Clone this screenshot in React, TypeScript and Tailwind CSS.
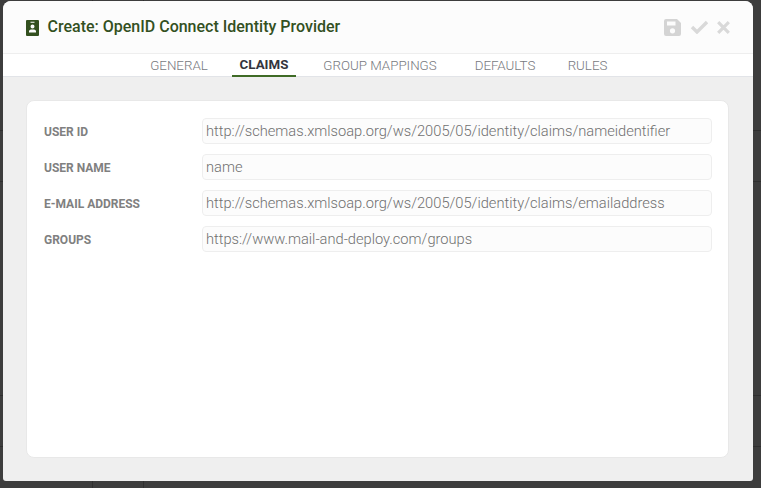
import { Fragment } from "react";

const tabs = [
  { label: "GENERAL", cls: "w-[70px]", active: false },
  { label: "CLAIMS", cls: "ml-[18px] w-[64px]", active: true },
  { label: "GROUP MAPPINGS", cls: "ml-[20px] w-[128px]", active: false },
  { label: "DEFAULTS", cls: "ml-[24px] w-[74px]", active: false },
  { label: "RULES", cls: "ml-[19px] w-[53px]", active: false },
];

const fields = [
  ["USER ID", "http://schemas.xmlsoap.org/ws/2005/05/identity/claims/nameidentifier"],
  ["USER NAME", "name"],
  ["E-MAIL ADDRESS", "http://schemas.xmlsoap.org/ws/2005/05/identity/claims/emailaddress"],
  ["GROUPS", "https://www.mail-and-deploy.com/groups"],
];

const hLines = ["top-[130px]", "top-[181px]", "top-[395px]", "top-[446px]"];
const vLines = ["left-[92px]", "left-[143px]"];

export default function App() {
  return (
    <div className="relative h-[488px] w-[761px] overflow-hidden bg-[#3d3d3d] pl-[3px] pt-px font-['Roboto',sans-serif]">
      {hLines.map((c) => (
        <div key={c} className={`absolute left-0 h-px w-full bg-[#2f2f2f] ${c}`} />
      ))}
      {vLines.map((c) => (
        <div key={c} className={`absolute top-0 h-full w-px bg-[#2f2f2f] ${c}`} />
      ))}
      <div className="relative flex h-[480px] w-[750px] flex-col overflow-hidden rounded-tl-[8px] rounded-tr-[8px] rounded-bl-[3px] rounded-br-[3px] bg-[#efefef]">
        <header className="flex h-[53px] shrink-0 items-center justify-between border-b border-[#eeeeee] bg-[#fcfcfc] pl-[23px] pr-[22px]">
          <div className="flex items-center gap-[8.5px]">
            <svg width="13" height="16" viewBox="0 0 13 16" className="mt-px">
              <path
                fill="#33501f"
                fillRule="evenodd"
                d="M1 0h11a1 1 0 0 1 1 1v14a1 1 0 0 1-1 1H1a1 1 0 0 1-1-1V1a1 1 0 0 1 1-1ZM4.5 1.8v1h4v-1ZM6.5 4.6a2 2 0 1 0 0 4a2 2 0 0 0 0-4ZM3 12.6h7v-1.3c0-1-1-1.9-2-1.9H5c-1 0-2 .9-2 1.9Z"
              />
            </svg>
            <h1 className="text-[16px] font-medium leading-[20px] text-[#33501f]">
              Create: OpenID Connect Identity Provider
            </h1>
          </div>
          <div className="mr-px flex items-center gap-[9px]">
            <svg width="17" height="17" viewBox="0 0 17 17">
              <path
                fill="#d4d4d4"
                fillRule="evenodd"
                d="M2 0h11l4 4v11a2 2 0 0 1-2 2H2a2 2 0 0 1-2-2V2a2 2 0 0 1 2-2ZM3 2.5v4h8.5v-4ZM8.5 9.2a2.6 2.6 0 1 0 0 5.2a2.6 2.6 0 0 0 0-5.2Z"
              />
            </svg>
            <svg width="18" height="14" viewBox="0 0 18 14">
              <path fill="none" stroke="#d9d9d9" strokeWidth="3.4" d="M2 7l5 5L17 2" />
            </svg>
            <svg width="13" height="13" viewBox="0 0 13 13">
              <path fill="none" stroke="#d9d9d9" strokeWidth="3.2" d="M1.2 1.2l10.6 10.6M11.8 1.2L1.2 11.8" />
            </svg>
          </div>
        </header>
        <nav className="flex h-[23px] shrink-0 items-stretch border-b border-[#e2e4e8] bg-white pl-[141px]">
          {tabs.map((t) => (
            <div
              key={t.label}
              className={`flex items-center justify-center text-[13.33px] leading-none ${t.cls} ${
                t.active
                  ? "-mb-px border-b-2 border-[#3f6b26] pt-[1px] font-bold text-[#33353d]"
                  : "pt-[1px] font-light text-[#77797e]"
              }`}
            >
              {t.label}
            </div>
          ))}
        </nav>
        <main className="flex min-h-0 flex-1 flex-col pb-[23px] pl-[23px] pr-[24px] pt-[23px]">
          <section className="flex-1 rounded-[8px] border border-[#e8e8e8] bg-white pl-[17px] pr-[16px] pt-[17px]">
            <div className="grid grid-cols-[158px_1fr] gap-y-[10px]">
              {fields.map(([label, value]) => (
                <Fragment key={label}>
                  <label className="flex h-[26px] items-center pt-px text-[12px] font-bold text-[#808080]">{label}</label>
                  <div className="flex h-[26px] items-center rounded-[4px] border border-[#eeeeee] bg-[#fcfcfc] pl-[3px] text-[14.667px] font-light text-[#707070]">
                    {value}
                  </div>
                </Fragment>
              ))}
            </div>
          </section>
        </main>
      </div>
    </div>
  );
}
